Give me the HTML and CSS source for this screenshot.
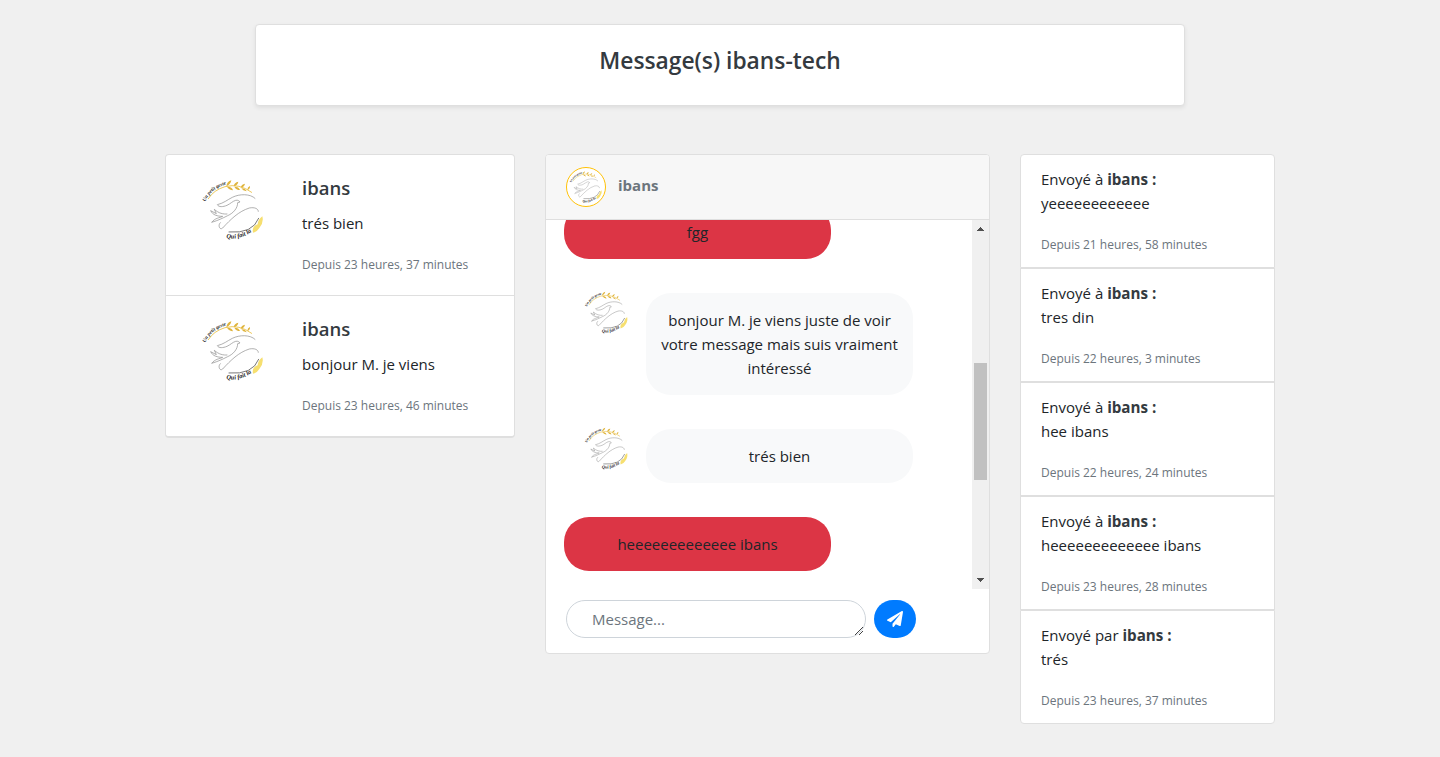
FILE: index.html
```html
<!DOCTYPE html>
<html lang="fr">
<head>
<meta charset="utf-8">
<title>Message(s) ibans-tech</title>
<link rel="stylesheet" href="styles.css">
</head>
<body>
<svg class="sprite" width="0" height="0" aria-hidden="true">
  <defs>
    <path id="arc-top" d="M45 95C52 76 72 50 114 42"/>
    <path id="arc-bottom" d="M108 204Q152 213 196 176"/>
    <symbol id="logo" viewBox="32 24 192 192">
      <g fill="none" stroke-linecap="round">
        <path stroke="#eec95c" stroke-width="3" d="M54 86Q70 60 104 50Q147 39 184 67"/>
        <path stroke="#8a8a8a" stroke-width="2" d="M194 85C180 71 148 71 126 82C110 90 101 99 81 104C85 112 98 111 110 106C121 101 126 94 136 91C143 89 148 94 149 96L142 98C142 114 130 129 112 137C96 145 84 151 64 157C74 144 87 144 97 139C81 139 67 135 61 122L78 131L72 118C85 130 99 133 110 132"/>
        <path stroke="#8a8a8a" stroke-width="2" d="M90 158C81 166 89 182 97 174C121 148 145 124 177 114C193 111 204 116 204 124"/>
        <path stroke="#333" stroke-width="2" d="M116 186Q187 192 205 145"/>
      </g>
      <g fill="#dfb43d">
        <path d="M108 49Q110 34 123 31Q121 43 108 49ZM110 50Q125 49 128 61Q116 60 110 50ZM130 48Q132 37 144 35Q142 47 130 48ZM132 50Q146 50 149 60Q137 60 132 50ZM151 53Q153 43 164 41Q162 51 151 53ZM153 55Q166 55 169 64Q157 62 153 55ZM171 60Q171 51 179 48Q180 57 171 60Z"/>
      </g>
      <path d="M188 188Q184 169 202 163Q203 148 216 139Q221 158 207 174Q200 186 188 188Z" fill="#f6df70"/>
      <g class="logo-text">
        <text font-size="15"><textPath href="#arc-top">Un petit geste</textPath></text>
        <text font-size="19"><textPath href="#arc-bottom">Qui fait la</textPath></text>
      </g>
    </symbol>
  </defs>
</svg>

<header class="card page-title"><h1>Message(s) ibans-tech</h1></header>

<main class="columns">
  <section class="card threads">
    <article class="thread">
      <svg class="thread-logo"><use href="#logo"/></svg>
      <div>
        <h2>ibans</h2>
        <p>trés bien</p>
        <small>Depuis 23 heures, 37 minutes</small>
      </div>
    </article>
    <article class="thread">
      <svg class="thread-logo"><use href="#logo"/></svg>
      <div>
        <h2>ibans</h2>
        <p>bonjour M. je viens</p>
        <small>Depuis 23 heures, 46 minutes</small>
      </div>
    </article>
  </section>

  <section class="card chat">
    <div class="chat-header">
      <span class="avatar"><svg><use href="#logo"/></svg></span>
      <strong>ibans</strong>
    </div>
    <div class="chat-body">
      <div class="messages">
        <div class="bubble sent">fgg</div>
        <div class="received-row">
          <svg><use href="#logo"/></svg>
          <div class="bubble received">bonjour M. je viens juste de voir<br>votre message mais suis vraiment<br>intéressé</div>
        </div>
        <div class="received-row">
          <svg><use href="#logo"/></svg>
          <div class="bubble received">trés bien</div>
        </div>
        <div class="bubble sent">heeeeeeeeeeeee ibans</div>
      </div>
      <div class="scrollbar">
        <svg width="17" height="17" shape-rendering="crispEdges"><path d="M8 7h1v1h1v1h1v1h1v1H5v-1h1V9h1V8h1z" fill="#505050"/></svg>
        <div class="thumb"></div>
        <svg width="17" height="17" shape-rendering="crispEdges"><path d="M5 6h7v1h-1v1h-1v1H9v1H8V9H7V8H6V7H5z" fill="#505050"/></svg>
      </div>
    </div>
    <form class="composer">
      <div class="field">
        <span>Message...</span>
        <svg class="grip" width="10" height="10"><path d="M1 9L9 1M5 9L9 5" stroke="#444" fill="none"/></svg>
      </div>
      <button type="button" aria-label="Envoyer">
        <svg width="16" height="16" viewBox="0 0 512 512"><path fill="#fff" d="M476 3.2L12.500 270.600c-18.100 10.400-15.800 35.600 2.200 43.200L121 358.400l287.300-253.200c5.500-4.900 13.300 2.600 8.600 8.300L176 407v80.500c0 23.600 28.500 32.900 42.500 15.800L282 426l124.600 52.200c14.200 6 30.400-2.900 33-18.200l72-432C515 7.800 493.300-6.800 476 3.200z"/></svg>
      </button>
    </form>
  </section>

  <section class="activity">
    <article class="card entry"><p>Envoyé à <b>ibans :</b></p><p>yeeeeeeeeeeee</p><small>Depuis 21 heures, 58 minutes</small></article>
    <article class="card entry"><p>Envoyé à <b>ibans :</b></p><p>tres din</p><small>Depuis 22 heures, 3 minutes</small></article>
    <article class="card entry"><p>Envoyé à <b>ibans :</b></p><p>hee ibans</p><small>Depuis 22 heures, 24 minutes</small></article>
    <article class="card entry"><p>Envoyé à <b>ibans :</b></p><p>heeeeeeeeeeeee ibans</p><small>Depuis 23 heures, 28 minutes</small></article>
    <article class="card entry"><p>Envoyé par <b>ibans :</b></p><p>trés</p><small>Depuis 23 heures, 37 minutes</small></article>
  </section>
</main>
</body>
</html>
```
FILE: styles.css
```css
* { box-sizing: border-box; }
body {
  margin: 0;
  min-height: 757px;
  overflow: hidden;
  background: #f0f0f0;
  color: #212529;
  font: 15px/24px "Open Sans", "Noto Sans", sans-serif;
}
h1, h2, p { margin: 0; }
svg { display: block; flex: none; }
.sprite { position: absolute; }
.logo-text { font-family: "Liberation Serif", serif; font-style: italic; font-weight: bold; fill: #222; }

.card { background: #fff; border: 1px solid #dfdfdf; border-radius: 4px; }
small { display: block; color: #6c757d; font-size: 12px; line-height: 24px; }

.page-title {
  width: 930px;
  height: 82px;
  margin: 24px auto 48px;
  padding-top: 21px;
  text-align: center;
  box-shadow: 0 2px 4px rgba(0, 0, 0, .075);
}
.page-title h1 { font-size: 22.8px; line-height: 29px; font-weight: 600; color: #343a40; }

.columns { display: flex; align-items: flex-start; gap: 30px; width: 1110px; margin: 0 auto; }

.threads { width: 350px; height: 284px; border-bottom-width: 2px; }
.thread { display: flex; height: 140px; padding: 21px 0 0 35px; }
.thread + .thread { height: 141px; border-top: 1px solid #dfdfdf; }
.thread-logo { width: 64px; height: 64px; margin: 2px 37px 0 0; }
.thread h2 { font-size: 18.5px; line-height: 24px; font-weight: 600; color: #343a40; margin-bottom: 11px; }
.thread small { margin-top: 18px; }

.chat { width: 445px; height: 500px; overflow: hidden; }
.chat-header {
  display: flex;
  align-items: center;
  height: 65px;
  padding-left: 20px;
  gap: 12px;
  background: #f7f7f7;
  border-bottom: 1px solid #dfdfdf;
}
.avatar {
  display: flex;
  align-items: center;
  justify-content: center;
  width: 40px;
  height: 40px;
  border: 1px solid #ffc107;
  border-radius: 50%;
  background: #fff;
}
.avatar svg { width: 34px; height: 34px; }
.chat-header strong { color: #6c757d; font-weight: 700; margin-top: -5px; }
.chat-body { display: flex; height: 369px; overflow: hidden; }
.messages { flex: 1; display: flex; flex-direction: column; gap: 34px; margin-top: -15px; padding-left: 18px; }
.bubble { flex: none; width: 267px; padding: 15px 0; border-radius: 25px; text-align: center; }
.sent { background: #dc3545; }
.received { background: #f8f9fa; }
.received-row { display: flex; gap: 17px; padding-left: 20px; }
.received-row svg { width: 45px; height: 45px; margin-top: -3px; }
.scrollbar { display: flex; flex-direction: column; align-items: center; justify-content: space-between; width: 17px; background: #f0f0f0; }
.thumb { width: 13px; height: 117px; margin-top: 34px; background: #c1c1c1; }

.composer { display: flex; gap: 8px; padding: 11px 20px 0; }
.field {
  display: flex;
  justify-content: space-between;
  align-items: flex-end;
  width: 300px;
  height: 38px;
  padding: 0 1px 1px 25px;
  border: 1px solid #ced4da;
  border-radius: 19px;
  color: #6c757d;
}
.field span { align-self: center; }
.composer button {
  display: flex;
  align-items: center;
  justify-content: center;
  width: 42px;
  height: 38px;
  padding: 0;
  border: 0;
  border-radius: 19px;
  background: #007bff;
}

.activity { width: 255px; }
.entry { height: 114px; padding: 12px 20px 0; border-radius: 0; }
.entry:first-child { border-radius: 4px 4px 0 0; }
.entry:last-child { border-radius: 0 0 4px 4px; }
.entry small { margin-top: 18px; }
.entry b { color: #343a40; font-size: 15.2px; }
```
